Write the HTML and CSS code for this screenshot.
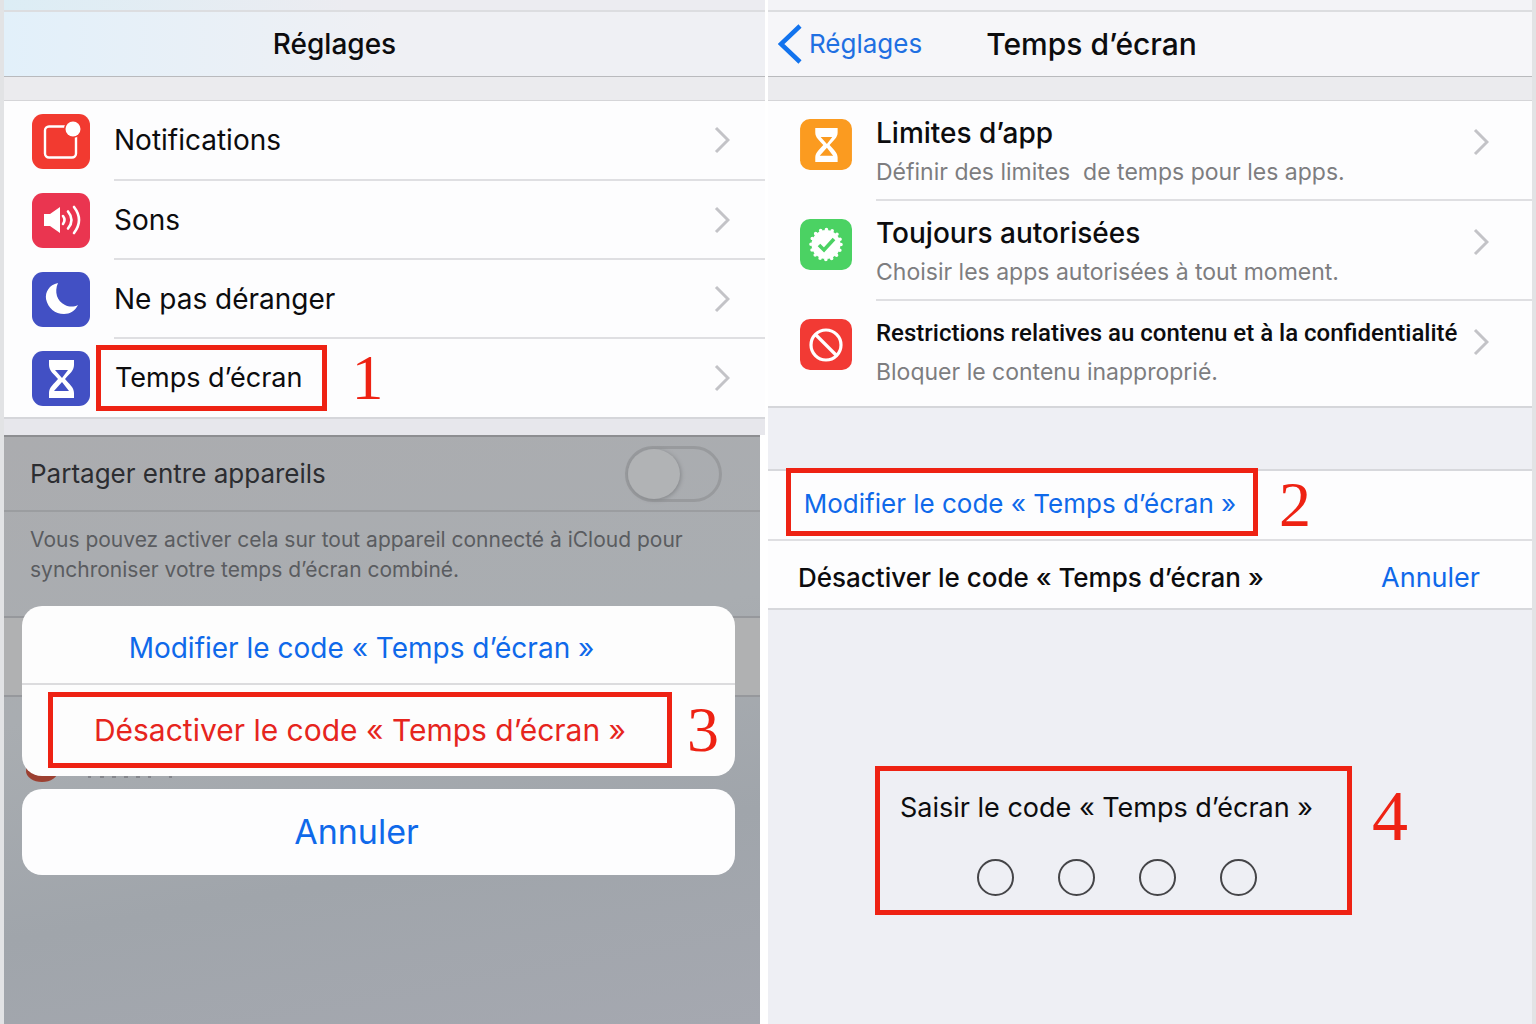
FILE: index.html
```html
<!DOCTYPE html>
<html lang="fr">
<head>
<meta charset="utf-8">
<meta name="viewport" content="width=device-width, initial-scale=1">
<title>Temps d’écran</title>
<link rel="stylesheet" href="styles.css">
</head>
<body>
<svg class="sprite" aria-hidden="true">
  <symbol id="chevron" viewBox="0 0 16 28"><path d="M2 2l12 12L2 26" fill="none" stroke="#c3c3c7" stroke-width="3"/></symbol>
  <symbol id="hourglass" viewBox="0 0 58 58">
    <path d="M17 10h25v5c0 6-5 9-9 14 4 5 9 8 9 14v5H17v-5c0-6 5-9 9-14-4-5-9-8-9-14z" fill="#fff"/>
    <path d="M23 20h13l-6 8zM30 32l7 9H22z" fill="currentColor"/>
  </symbol>
</svg>
<main class="guide">
  <div class="phone">
    <div class="strip strip-blue"></div>
    <header class="bar bar-blue"><h1 class="bar-title">Réglages</h1></header>
    <ul class="list list-main">
      <li><a class="row" href="#notifications">
        <svg class="icon" viewBox="0 0 58 55"><rect width="58" height="55" rx="11" fill="#f23a30"/><rect x="13" y="12.500" width="31" height="31" rx="4" fill="none" stroke="#fff" stroke-width="2.400"/><circle cx="41" cy="15" r="9" fill="#f23a30"/><circle cx="41" cy="15" r="7.500" fill="#fff"/></svg>
        <span class="row-text"><span class="label">Notifications</span><svg class="chevron"><use href="#chevron"/></svg></span></a></li>
      <li><a class="row" href="#sons">
        <svg class="icon" viewBox="0 0 58 55"><rect width="58" height="55" rx="11" fill="#ea3550"/><path d="M12 21h6l10-7v26l-10-7h-6z" fill="#fff"/><g fill="none" stroke="#fff" stroke-width="2.600" stroke-linecap="round"><path d="M31 23q3 4 0 8"/><path d="M36 18.500q7 8.500 0 17"/><path d="M42 14q10 13 0 26"/></g></svg>
        <span class="row-text"><span class="label">Sons</span><svg class="chevron"><use href="#chevron"/></svg></span></a></li>
      <li><a class="row" href="#ne-pas-deranger">
        <svg class="icon" viewBox="0 0 58 55"><rect width="58" height="55" rx="11" fill="#4250c4"/><path d="M26 11C17 13 13 20 14 27c2 9 9 15 18 15 6 0 11-3 14-9-4 2-9 2-13 0-8-4-11-13-7-22z" fill="#fff"/></svg>
        <span class="row-text"><span class="label">Ne pas déranger</span><svg class="chevron"><use href="#chevron"/></svg></span></a></li>
      <li><a class="row" href="#temps-ecran">
        <svg class="icon icon-indigo" viewBox="0 0 58 55"><rect width="58" height="55" rx="11" fill="currentColor"/><use href="#hourglass" y="-1" width="58" height="58"/></svg>
        <span class="row-text"><span class="mark mark-label">Temps d’écran</span><span class="step">1</span><svg class="chevron"><use href="#chevron"/></svg></span></a></li>
    </ul>
    <section class="dimmed">
      <label class="share" for="share">Partager entre appareils<input class="switch" id="share" type="checkbox" role="switch"></label>
      <p class="caption">Vous pouvez activer cela sur tout appareil connecté à iCloud pour synchroniser votre temps d’écran combiné.</p>
      <div class="dim-row"></div>
      <svg class="dim-app" viewBox="0 0 160 22" aria-hidden="true"><ellipse cx="18" cy="10" rx="16" ry="11" fill="#9c4031"/><path d="M64 16h3m9 0h4m8 0h4m8 0h4m8 0h4m8 0h3m18 0h3" stroke="#85878d" stroke-width="2"/></svg>
      <div class="sheet">
        <div class="sheet-group">
          <button class="sheet-action" type="button">Modifier le code « Temps d’écran »</button>
          <div class="sheet-danger">
            <button class="mark danger" type="button">Désactiver le code « Temps d’écran »</button>
            <span class="step">3</span>
          </div>
        </div>
        <button class="sheet-cancel" type="button">Annuler</button>
      </div>
    </section>
  </div>

  <div class="phone phone-detail">
    <div class="strip"></div>
    <header class="bar bar-detail">
      <a class="back" href="#reglages"><svg class="back-arrow" viewBox="0 0 24 40"><path d="M22 2L3 20l19 18" fill="none" stroke="#1273ee" stroke-width="4.500"/></svg>Réglages</a>
      <h1 class="bar-title bar-title-detail">Temps d’écran</h1>
    </header>
    <ul class="list">
      <li><a class="row row-tall" href="#limites">
        <svg class="icon icon-small icon-orange" viewBox="0 0 58 57"><rect width="58" height="57" rx="11" fill="currentColor"/><use href="#hourglass" width="58" height="58"/></svg>
        <span class="row-text row-text-tall"><span class="copy"><span class="title">Limites d’app</span><span class="subtitle">Définir des limites&nbsp; de temps pour les apps.</span></span><svg class="chevron"><use href="#chevron"/></svg></span></a></li>
      <li><a class="row row-tall" href="#autorisees">
        <svg class="icon icon-small" viewBox="0 0 52 51"><rect width="52" height="51" rx="10" fill="#4bd263"/><circle cx="26" cy="25.500" r="14.500" fill="#fff"/><circle cx="26" cy="25.500" r="15" fill="none" stroke="#fff" stroke-width="3.600" stroke-linecap="round" stroke-dasharray="0 5.890"/><path d="M19 26l5 5 10-11" fill="none" stroke="#4bd263" stroke-width="3.600"/></svg>
        <span class="row-text row-text-tall"><span class="copy"><span class="title">Toujours autorisées</span><span class="subtitle">Choisir les apps autorisées à tout moment.</span></span><svg class="chevron"><use href="#chevron"/></svg></span></a></li>
      <li><a class="row row-tall" href="#restrictions">
        <svg class="icon icon-small" viewBox="0 0 52 51"><rect width="52" height="51" rx="10" fill="#f23a34"/><circle cx="26" cy="26" r="15" fill="none" stroke="#fff" stroke-width="3.200"/><path d="M15.500 15.500l21 21" stroke="#fff" stroke-width="3.200"/></svg>
        <span class="row-text row-text-tall"><span class="copy"><span class="title title-long">Restrictions relatives au contenu et à la confidentialité</span><span class="subtitle">Bloquer le contenu inapproprié.</span></span><svg class="chevron"><use href="#chevron"/></svg></span></a></li>
    </ul>
    <section class="codes">
      <div class="code-row">
        <button class="mark change" type="button">Modifier le code « Temps d’écran »</button>
        <span class="step">2</span>
      </div>
      <div class="code-row code-row-off">
        <span class="disable">Désactiver le code « Temps d’écran »</span>
        <button class="cancel" type="button">Annuler</button>
      </div>
    </section>
    <form class="entry">
      <fieldset class="mark passcode">
        <legend class="passcode-title">Saisir le code « Temps d’écran »</legend>
        <div class="dots">
          <input class="dot" type="password" maxlength="1" aria-label="Chiffre 1">
          <input class="dot" type="password" maxlength="1" aria-label="Chiffre 2">
          <input class="dot" type="password" maxlength="1" aria-label="Chiffre 3">
          <input class="dot" type="password" maxlength="1" aria-label="Chiffre 4">
        </div>
      </fieldset>
      <span class="step step-large">4</span>
    </form>
  </div>
</main>
</body>
</html>
```
FILE: styles.css
```css
* { box-sizing: border-box; }

body {
  margin: 0;
  background: #e2e3e5;
  color: #0c0c0e;
  font-family: Inter, "Liberation Sans", sans-serif;
  font-size: 27px;
  line-height: 34px;
}

h1, p, ul, fieldset { margin: 0; padding: 0; }
ul { list-style: none; }
a { color: inherit; text-decoration: none; }
button { border: 0; padding: 0; background: none; color: #0f69ea; font: inherit; cursor: pointer; }
.sprite { position: absolute; width: 0; height: 0; }

.guide {
  display: grid;
  grid-template-columns: 761fr 764fr;
  gap: 3px;
  min-height: 100vh;
  margin: 0 4px;
  background: #fff;
}

.phone { display: flex; flex-direction: column; min-width: 0; }
.phone-detail { background: #eeeff4; }

/* Navigation bar */
.strip { height: 12px; border-bottom: 2px solid #dcdde0; background: #f3f3f7; }
.strip-blue { background: linear-gradient(90deg, #dcedf5, #ececf1 45%); }
.bar {
  display: flex;
  align-items: center;
  justify-content: center;
  height: 65px;
  padding-right: 100px;
  border-bottom: 1px solid #b9babd;
  background: #f6f6f9;
}
.bar-blue { background: linear-gradient(90deg, #e2f0fa, #eff0f4 50%); }
.bar-title { font-size: 28px; font-weight: 500; line-height: 34px; }
.bar-detail { justify-content: flex-start; gap: 64px; padding: 0 10px; }
.bar-title-detail { font-size: 30px; }
.back { display: flex; align-items: center; gap: 7px; color: #1f70e2; font-size: 26px; }
.back-arrow { width: 24px; height: 40px; }

/* Settings rows */
.list {
  margin-top: 23px;
  border-top: 1px solid #d5d5d8;
  border-bottom: 2px solid #d5d6da;
  background: #fdfdfe;
  box-shadow: 0 -23px #ebebee;
}
.list-main { box-shadow: 0 -23px #ebebee, 0 16px #e7e7ec; }
.row { display: flex; align-items: center; padding-left: 28px; }
.icon { flex: none; width: 58px; height: 55px; }
.icon-indigo { color: #4250c4; }
.row-text {
  display: flex;
  flex: 1;
  align-items: center;
  height: 79px;
  margin-left: 24px;
  padding-right: 35px;
  border-bottom: 2px solid #dfdfe2;
}
.list-main li:first-child .row-text { height: 80px; }
li:last-child .row-text { height: 78px; border-bottom: 0; }
.label { font-size: 28px; }
.chevron { flex: none; width: 16px; height: 28px; margin-left: auto; }

.mark { border: 5px solid #ee2213; }
.mark-label { margin-left: -18px; padding: 11px 20px 11px 14px; }
.step {
  margin-left: 24px;
  color: #ee2213;
  font-family: "Liberation Serif", serif;
  font-size: 64px;
  line-height: 60px;
}

.row-tall { align-items: flex-start; padding-left: 32px; }
.icon-small { width: 52px; height: 51px; margin-top: 18px; }
.icon-orange { color: #fb9b20; }
.row-text-tall { align-items: flex-start; height: 100px; padding: 15px 43px 0 0; }
li:last-child .row-text-tall { height: 105px; }
.row-text-tall .chevron { margin-top: 12px; }
.copy { display: grid; gap: 7px; white-space: nowrap; }
.title { font-size: 28px; font-weight: 500; }
.title-long { font-family: Roboto, "Liberation Sans", sans-serif; font-size: 24px; }
.subtitle { color: #7d7d80; font-size: 23px; line-height: 30px; }

/* Dimmed screen with its action sheet */
.dimmed {
  position: relative;
  flex: 1;
  margin: 16px 5px 0 0;
  border-top: 2px solid #8d8e91;
  background: linear-gradient(170deg, #abacaf, #a9adb1 40%, #a0a5ab 70%, #a5a8b0);
}
.share {
  display: flex;
  align-items: center;
  justify-content: space-between;
  height: 75px;
  padding: 0 38px 0 26px;
  border-bottom: 2px solid #9b9da0;
  color: #2c2d31;
  font-size: 26px;
}
.switch {
  appearance: none;
  width: 97px;
  height: 56px;
  margin: 0;
  border: 3px solid #989a9d;
  border-radius: 28px;
}
.switch::before {
  content: "";
  display: block;
  width: 52px;
  height: 50px;
  border-radius: 50%;
  background: #b1b3b5;
  box-shadow: 1px 1px 4px #85878a;
}
.caption { padding: 13px 50px 31px 26px; color: #5a5c60; font-size: 21px; line-height: 30px; }
.dim-row { height: 81px; border: solid #96989c; border-width: 2px 0; background: #b0b1b2; }
.dim-app { display: block; width: 160px; height: 22px; margin: 64px 0 0 20px; }

.sheet { position: absolute; inset: 169px 25px auto 18px; display: grid; gap: 13px; }
.sheet-group { overflow: hidden; border-radius: 20px; background: #fdfdfd; }
.sheet-action { display: block; width: 100%; height: 79px; padding: 6px 34px 0 0; border-bottom: 2px solid #dcdcde; font-size: 28px; }
.sheet-danger { display: flex; align-items: center; height: 91px; padding: 0 0 2px 26px; }
.danger { width: 624px; height: 76px; color: #e6251d; font-size: 30px; }
.sheet-danger .step { margin-left: 15px; }
.sheet-cancel { height: 86px; padding-right: 44px; border-radius: 20px; background: #fdfdfe; font-size: 34px; line-height: 40px; }

/* Passcode actions */
.codes { margin-top: 61px; border: solid #d7d8dc; border-width: 2px 0; background: #fdfdfe; }
.code-row { display: flex; align-items: center; height: 68px; padding-left: 18px; }
.change { align-self: flex-start; width: 472px; height: 68px; flex: none; margin-top: -3px; padding: 4px 4px 0 0; font-size: 26px; }
.code-row .step { margin-left: 21px; }
.code-row-off { justify-content: space-between; height: 69px; padding: 6px 52px 0 30px; border-top: 2px solid #dfdfe2; }
.disable { font-size: 26px; font-weight: 500; }

/* Passcode entry */
.entry { display: flex; align-items: flex-start; margin: 156px 0 0 107px; }
.passcode { display: grid; justify-items: center; align-content: start; width: 477px; height: 149px; padding: 20px 0 0; }
.passcode-title { float: left; width: 100%; padding: 0 0 0 20px; }
.dots { display: flex; gap: 44px; margin-top: 34px; padding-left: 7px; }
.dot { width: 37px; height: 37px; border: 2px solid #454548; border-radius: 50%; padding: 0; background: none; text-align: center; }
.step-large { margin: 20px 0 0 20px; font-size: 72px; }
```
